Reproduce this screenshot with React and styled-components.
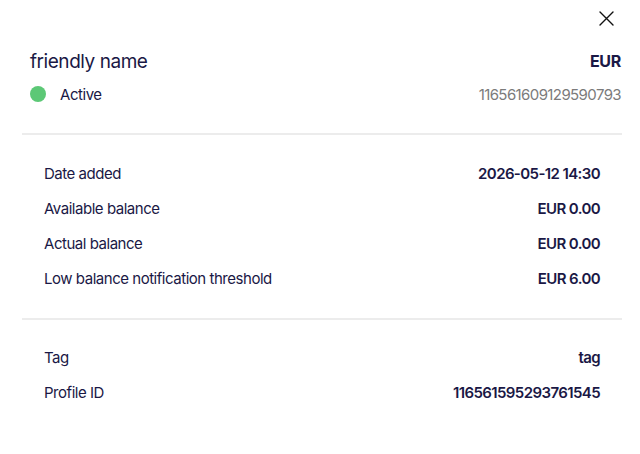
import React from "react";
import styled, { createGlobalStyle } from "styled-components";

const Global = createGlobalStyle`
  html, body { margin: 0; padding: 0; background: #ffffff; }
  body { font-family: Inter, "Noto Sans", sans-serif; color: #1a1845; }
`;

const Panel = styled.div`
  width: 640px;
  height: 454px;
  box-sizing: border-box;
  background: #ffffff;
  display: flex;
  flex-direction: column;
`;

const TopBar = styled.div`
  display: flex;
  justify-content: flex-end;
  padding: 10px 26px 0 0;
  height: 35px;
  box-sizing: border-box;
`;

const CloseButton = styled.button`
  width: 16px;
  height: 16px;
  padding: 0;
  border: none;
  background: none;
  display: flex;
  align-items: center;
  justify-content: center;
  cursor: pointer;
`;

const Header = styled.div`
  display: flex;
  flex-direction: column;
  padding: 11px 19px 21px 30px;
`;

const HeaderRow = styled.div`
  display: flex;
  align-items: center;
  justify-content: space-between;
  height: ${(p) => p.$h}px;
`;

const Title = styled.div`
  font-size: 19px;
  font-weight: 400;
  letter-spacing: -0.45px;
`;

const Currency = styled.div`
  font-size: 16px;
  font-weight: 700;
  letter-spacing: -0.3px;
`;

const Status = styled.div`
  display: flex;
  align-items: center;
  gap: 14px;
  font-size: 15px;
  letter-spacing: -0.45px;
`;

const Dot = styled.span`
  width: 16px;
  height: 16px;
  border-radius: 50%;
  background: #5cc876;
`;

const AccountNumber = styled.div`
  font-size: 15px;
  color: #7b7b7b;
  letter-spacing: -0.6px;
`;

const Divider = styled.hr`
  margin: 0 18px 0 22px;
  border: none;
  height: 2px;
  background: #ececec;
`;

const Section = styled.div`
  display: flex;
  flex-direction: column;
  padding: ${(p) => p.$pt}px 40px ${(p) => p.$pb}px 44px;
`;

const Row = styled.div`
  display: flex;
  align-items: center;
  justify-content: space-between;
  height: 35px;
  font-size: 15px;
`;

const Label = styled.span`
  font-weight: 400;
  letter-spacing: -0.47px;
`;

const Value = styled.span`
  font-weight: 600;
  letter-spacing: -0.6px;
`;

const details = [
  ["Date added", "2026-05-12 14:30"],
  ["Available balance", "EUR 0.00"],
  ["Actual balance", "EUR 0.00"],
  ["Low balance notification threshold", "EUR 6.00"],
];

const extra = [
  ["Tag", "tag"],
  ["Profile ID", "116561595293761545"],
];

export default function App() {
  return (
    <>
      <Global />
      <Panel>
        <TopBar>
          <CloseButton aria-label="Close">
            <svg width="15" height="15" viewBox="0 0 15 15">
              <path d="M1 1 L14 14 M14 1 L1 14" stroke="#111" strokeWidth="1.4" strokeLinecap="round" />
            </svg>
          </CloseButton>
        </TopBar>
        <Header>
          <HeaderRow $h={30}>
            <Title>friendly name</Title>
            <Currency>EUR</Currency>
          </HeaderRow>
          <HeaderRow $h={36}>
            <Status>
              <Dot />
              Active
            </Status>
            <AccountNumber>116561609129590793</AccountNumber>
          </HeaderRow>
        </Header>
        <Divider />
        <Section $pt={21} $pb={22}>
          {details.map(([l, v]) => (
            <Row key={l}>
              <Label>{l}</Label>
              <Value>{v}</Value>
            </Row>
          ))}
        </Section>
        <Divider />
        <Section $pt={20} $pb={0}>
          {extra.map(([l, v]) => (
            <Row key={l}>
              <Label>{l}</Label>
              <Value>{v}</Value>
            </Row>
          ))}
        </Section>
      </Panel>
    </>
  );
}
